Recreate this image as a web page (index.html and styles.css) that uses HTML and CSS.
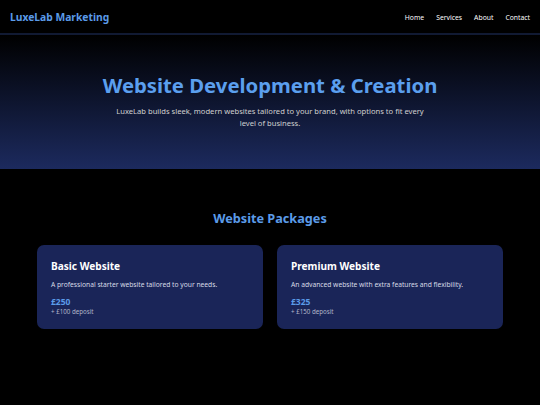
FILE: index.html
```html
<!DOCTYPE html>
<html lang="en">
<head>
<meta charset="utf-8">
<title>LuxeLab Marketing</title>
<link rel="stylesheet" href="styles.css">
</head>
<body>
<header class="site-header">
  <div class="logo">LuxeLab Marketing</div>
  <nav class="nav">
    <a href="#">Home</a>
    <a href="#">Services</a>
    <a href="#">About</a>
    <a href="#">Contact</a>
  </nav>
</header>
<section class="hero">
  <h1>Website Development &amp; Creation</h1>
  <p>LuxeLab builds sleek, modern websites tailored to your brand, with options to fit every level of business.</p>
</section>
<section class="packages">
  <h2>Website Packages</h2>
  <div class="cards">
    <div class="card">
      <h3>Basic Website</h3>
      <p class="desc">A professional starter website tailored to your needs.</p>
      <div class="price">£250</div>
      <div class="deposit">+ £100 deposit</div>
    </div>
    <div class="card">
      <h3>Premium Website</h3>
      <p class="desc">An advanced website with extra features and flexibility.</p>
      <div class="price">£325</div>
      <div class="deposit">+ £150 deposit</div>
    </div>
  </div>
</section>
</body>
</html>
```
FILE: styles.css
```css
* { box-sizing: border-box; }
html, body { margin: 0; padding: 0; }
body {
  background: #000;
  color: #fff;
  font-family: "Noto Sans", "Open Sans", sans-serif;
  height: 405px;
  overflow: hidden;
}
.site-header {
  height: 35px;
  display: flex;
  align-items: center;
  justify-content: space-between;
  padding: 1px 10px 0;
  border-bottom: 2px solid #111a33;
}
.logo {
  color: #5b9be8;
  font-weight: 700;
  font-size: 10.3px;
}
.nav { display: flex; gap: 12px; }
.nav a {
  color: #fff;
  text-decoration: none;
  font-size: 6.8px;
}
.hero {
  height: 134px;
  background: linear-gradient(to bottom, #000 0%, #1c2a5e 100%);
  text-align: center;
  padding-top: 36px;
}
.hero h1 {
  margin: 0;
  color: #5b9fee;
  font-size: 20.3px;
  font-weight: 700;
  line-height: 28px;
}
.hero p {
  margin: 6px auto 0;
  width: 310px;
  color: #d0d0d0;
  font-size: 7.6px;
  line-height: 12px;
}
.packages {
  padding: 39px 37px 0;
}
.packages h2 {
  margin: 0;
  text-align: center;
  color: #5b9be8;
  font-size: 12.7px;
  font-weight: 700;
  line-height: 20px;
}
.cards {
  display: grid;
  grid-template-columns: 1fr 1fr;
  gap: 14px;
  margin-top: 17px;
}
.card {
  background: #1a2558;
  border-radius: 7px;
  padding: 14px 14px 13px;
  height: 84px;
}
.card h3 {
  margin: 0;
  font-size: 10.1px;
  font-weight: 700;
  line-height: 15px;
}
.card .desc {
  margin: 6px 0 0;
  font-size: 6.7px;
  color: #d8dbe6;
  line-height: 10px;
}
.card .price {
  margin-top: 6px;
  color: #5b9be8;
  font-weight: 700;
  font-size: 8.5px;
  line-height: 11px;
}
.card .deposit {
  color: #b0b6c8;
  font-size: 6.2px;
  line-height: 9px;
}
```
